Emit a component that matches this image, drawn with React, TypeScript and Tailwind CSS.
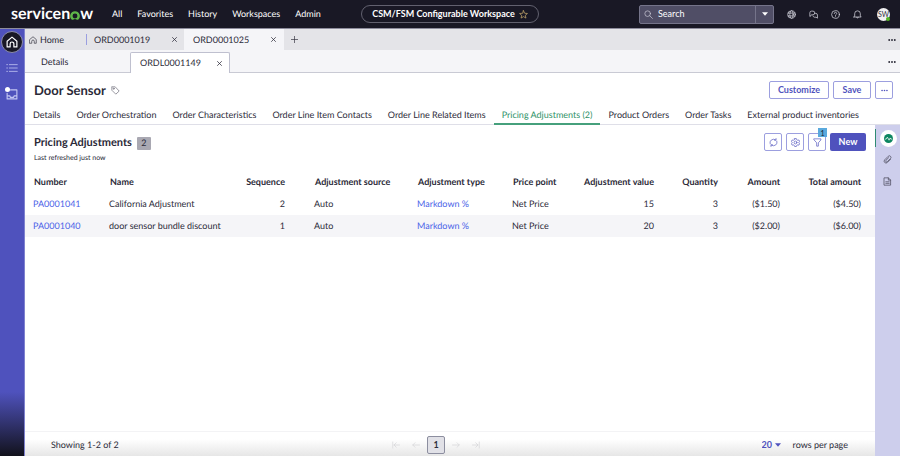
import type { ReactNode } from "react";

type IconProps = { className?: string; children: ReactNode; box?: number; stroke?: number };

function Icon({ className = "size-[9px]", children, box = 16, stroke = 1.3 }: IconProps) {
  return (
    <svg
      viewBox={`0 0 ${box} ${box}`}
      className={`shrink-0 ${className}`}
      fill="none"
      stroke="currentColor"
      strokeWidth={stroke}
      strokeLinecap="round"
      strokeLinejoin="round"
      aria-hidden="true"
    >
      {children}
    </svg>
  );
}

const Close = () => (
  <Icon className="size-[5px]" box={10} stroke={1.5}>
    <path d="M1 1l8 8M9 1l-8 8" />
  </Icon>
);

const Dots = ({ className = "size-2" }: { className?: string }) => (
  <svg viewBox="0 0 16 16" className={className} fill="currentColor" aria-hidden="true">
    <circle cx="2.4" cy="8" r="1.9" />
    <circle cx="8" cy="8" r="1.9" />
    <circle cx="13.6" cy="8" r="1.9" />
  </svg>
);

const House = ({ className, stroke }: { className: string; stroke?: number }) => (
  <Icon className={className} stroke={stroke}>
    <path d="M1.500 7L8 1.500l6.500 5.500V14.500H10.500V10.500a2.500 2.500 0 0 0-5 0V14.500H1.500Z" />
  </Icon>
);

function Logo() {
  return (
    <a href="#home" aria-label="servicenow" className="flex w-[82px] items-center text-[16px] leading-5 font-bold text-white">
      servicen
      <svg viewBox="0 0 20 18" className="mt-[3px] h-[9px] w-[10px] shrink-0" aria-hidden="true">
        <path
          d="M10 0.500A9.500 9.500 0 0 0 3.200 16.800c1 1 2.500 1.200 3.700.3a5.200 5.200 0 0 1 6.200 0c1.200.9 2.700.7 3.700-.3A9.500 9.500 0 0 0 10 .5Zm0 14.300a4.900 4.900 0 1 1 0-9.800 4.900 4.900 0 0 1 0 9.800Z"
          fill="#5fb64a"
        />
      </svg>
      w
    </a>
  );
}

function Header() {
  return (
    <header className="grid h-[29px] shrink-0 grid-cols-[1fr_auto_1fr] items-center border-b border-[#8d8c9c] bg-[#191825] text-white">
      <div className="flex items-center pl-[11px]">
        <Logo />
        <nav className="ml-[19px] flex gap-[15px]">
          {["All", "Favorites", "History", "Workspaces", "Admin"].map((item) => (
            <a key={item} href={`#${item}`}>
              {item}
            </a>
          ))}
        </nav>
      </div>
      <button className="flex h-[18px] w-[178px] items-center justify-center gap-1 rounded-full border border-[#62616f] font-bold">
        CSM/FSM Configurable Workspace
        <Icon className="size-[9px] text-[#c9ac6d]">
          <path d="M8 1.200l2 4.600 5 .4-3.800 3.300 1.200 4.900L8 11.800l-4.400 2.600 1.200-4.900L1 6.200l5-.4Z" />
        </Icon>
      </button>
      <div className="flex items-center justify-end pr-[10px]">
        <div className="flex h-[19px] w-[135px] items-center rounded-[2px] border border-[#75748a] bg-[#504e66]">
          <label htmlFor="search" className="ml-1 flex">
            <Icon className="size-[9px] text-[#c5c4d2]">
              <circle cx="6.500" cy="6.500" r="5" />
              <path d="M10.300 10.300L15 15" />
            </Icon>
          </label>
          <input
            id="search"
            type="text"
            aria-label="Search"
            placeholder="Search"
            className="ml-[5px] w-0 flex-1 bg-transparent outline-none placeholder:text-white"
          />
          <button aria-label="Search options" className="flex h-full w-[18px] items-center justify-center border-l border-[#75748a]">
            <svg viewBox="0 0 10 6" className="h-1 w-[6px]" fill="white" aria-hidden="true">
              <path d="M0 0h10L5 6Z" />
            </svg>
          </button>
        </div>
        <div className="ml-[13px] flex items-center gap-[13px] text-[#d8d8e2]">
          <button aria-label="Scope">
            <Icon>
              <circle cx="8" cy="8" r="6.700" />
              <ellipse cx="8" cy="8" rx="3" ry="6.700" />
              <path d="M1.800 5.500h12.400M1.800 10.500h12.400" />
            </Icon>
          </button>
          <button aria-label="Conversations">
            <Icon>
              <path d="M3 10.500L1.500 11.500V5a3 3 0 0 1 3-3H7a3 3 0 0 1 0 6.500H5Z" />
              <path d="M10.500 6H12a3 3 0 0 1 3 3v5.500L12.500 12.800H9.500A3 3 0 0 1 7 10.500" />
            </Icon>
          </button>
          <button aria-label="Help">
            <Icon>
              <circle cx="8" cy="8" r="6.900" />
              <path d="M5.800 6.200a2.200 2.200 0 1 1 3.300 1.900C8.300 8.600 8 8.900 8 9.700M8 11.900v.1" />
            </Icon>
          </button>
          <button aria-label="Notifications">
            <Icon>
              <path d="M1.500 12.500h13L13 10.500V6.500a5 5 0 0 0-10 0v4ZM6.200 12.800a1.900 1.900 0 0 0 3.600 0" />
            </Icon>
          </button>
        </div>
        <button
          aria-label="Account"
          className="relative ml-[15px] flex size-[13px] items-center justify-center rounded-full bg-[#f0f0f2] text-[7px] leading-none text-[#33323f]"
        >
          SW
          <span className="absolute right-0 bottom-0 size-1 rounded-full bg-[#52b524]" />
        </button>
      </div>
    </header>
  );
}

function Sidebar() {
  return (
    <aside className="flex w-[25px] shrink-0 flex-col items-center border-r border-[#7f82cf] bg-[linear-gradient(to_bottom,#4f52bd_0,#4f52bd_calc(100%_-_64px),#12121c_100%)]">
      <button aria-label="Home" className="mt-[2px] flex size-[22px] items-center justify-center rounded-full border border-[#8b8cab] bg-[#191825] text-white">
        <House className="size-3" stroke={1.6} />
      </button>
      <button aria-label="Lists" className="mt-[9px] text-[#b4b8ec]">
        <Icon className="size-3" stroke={1.2}>
          <path d="M1 3.500h1M4.500 3.500H15M1 8h1M4.500 8H15M1 12.500h1M4.500 12.500H15" />
        </Icon>
      </button>
      <button aria-label="Inbox" className="relative mt-[14px] text-[#c3c6f2]">
        <Icon className="size-3" stroke={1.5}>
          <path d="M6 2.500h8.500v12h-13V7M1.500 10.500h3.500L6 12.500h4l1-2h3.500" />
        </Icon>
        <span className="absolute -top-px -left-px size-[5px] rounded-full bg-white" />
      </button>
    </aside>
  );
}

function WorkspaceTabs() {
  return (
    <div className="flex h-[21px] shrink-0 items-center bg-[#e4e4e8]">
      <a href="#workspace" className="flex w-[61px] items-center gap-[3px] pl-1">
        <House className="size-2" stroke={1.3} />
        Home
      </a>
      <div className="flex h-[11px] w-[98px] items-center justify-between border-l border-[#9a9ee0] pr-[7px] pl-[7px]">
        <a href="#ORD0001019">ORD0001019</a>
        <button aria-label="Close ORD0001019">
          <Close />
        </button>
      </div>
      <div className="flex h-full w-[100px] items-center justify-between bg-[#f5f5f8] pr-2 pl-[9px]">
        <a href="#ORD0001025">ORD0001025</a>
        <button aria-label="Close ORD0001025">
          <Close />
        </button>
      </div>
      <button aria-label="New tab" className="ml-[7px]">
        <Icon className="size-[7px]" box={14}>
          <path d="M7 0.500v13M.5 7h13" />
        </Icon>
      </button>
      <button aria-label="More tabs" className="mr-1 ml-auto">
        <Dots />
      </button>
    </div>
  );
}

function RecordTabs() {
  return (
    <div className="flex h-[23px] shrink-0 items-end border-b border-[#c9cad4] bg-[#f5f5f8]">
      <a href="#details" className="flex h-5 w-[105px] items-center pl-4">
        Details
      </a>
      <div className="-mb-px flex h-[21px] w-[100px] items-center justify-between rounded-t-[2px] border border-b-0 border-[#bfc0cf] bg-white pr-[7px] pl-[9px]">
        <a href="#ORDL0001149">ORDL0001149</a>
        <button aria-label="Close ORDL0001149">
          <Close />
        </button>
      </div>
      <button aria-label="More record tabs" className="mr-1 ml-auto flex h-5 items-center">
        <Dots />
      </button>
    </div>
  );
}

const outline = "flex h-[18px] items-center justify-center rounded-[2px] border border-[#9c9fdf] font-bold text-[#4f52bd]";

function RecordHeader() {
  return (
    <div className="flex h-[34px] shrink-0 items-center pr-[7px] pl-[9px]">
      <h1 className="text-[13px] font-bold">Door Sensor</h1>
      <button aria-label="Tags" className="ml-[5px] text-[#74737f]">
        <Icon>
          <path d="M1.500 2v5.500l7 7 6-5.500-7-7.500H2Z" />
          <circle cx="4.800" cy="4.800" r="1" />
        </Icon>
      </button>
      <div className="ml-auto flex gap-1">
        <button className={`${outline} w-[60px]`}>Customize</button>
        <button className={`${outline} w-[38px]`}>Save</button>
        <button aria-label="More actions" className={`${outline} w-[18px]`}>
          <Dots className="size-[7px]" />
        </button>
      </div>
    </div>
  );
}

const sections = [
  "Details",
  "Order Orchestration",
  "Order Characteristics",
  "Order Line Item Contacts",
  "Order Line Related Items",
  "Pricing Adjustments (2)",
  "Product Orders",
  "Order Tasks",
  "External product inventories",
];

function SectionTabs() {
  return (
    <nav className="flex h-[18px] shrink-0 border-b border-[#dfdfe8]">
      {sections.map((name) => (
        <a
          key={name}
          href={`#${name}`}
          className={
            name === "Pricing Adjustments (2)"
              ? "-mb-px border-b-2 border-[#46a07c] px-2 pt-[2px] whitespace-nowrap text-[#2f9268]"
              : "px-2 pt-[2px] whitespace-nowrap"
          }
        >
          {name}
        </a>
      ))}
    </nav>
  );
}

function ListHeader() {
  return (
    <div className="flex items-start justify-between pt-2 pr-[9px] pl-[9px]">
      <div>
        <div className="flex items-center gap-[5px]">
          <h2 className="text-[11px] leading-5 font-bold">Pricing Adjustments</h2>
          <span className="flex h-[13px] w-[14px] items-center justify-center rounded-[1px] bg-[#a9a8b2]">2</span>
        </div>
        <p className="text-[7px] leading-[10px]">Last refreshed just now</p>
      </div>
      <div className="flex gap-1">
        <button aria-label="Refresh" className={`${outline} w-[18px]`}>
          <Icon stroke={1.2}>
            <path d="M2 10.500a6.300 6.300 0 0 1 9.500-7.200M14 5.500a6.300 6.300 0 0 1-9.500 7.200M12.500 1v2.800H9.700M3.500 15v-2.800h2.800" />
          </Icon>
        </button>
        <button aria-label="Settings" className={`${outline} w-[18px]`}>
          <Icon stroke={1.2}>
            <path d="M6.500 1h3l.6 2 1.900 1 2-.5 1.300 2.500L14 7.500v1.200l1.300 1.500-1.300 2.500-2-.5-1.900 1-.6 1.900h-3l-.6-1.900-1.900-1-2 .5L.7 10.200 2 8.700V7.500L.7 6 2 3.500l2 .5 1.900-1Z" />
            <circle cx="8" cy="8" r="2.500" />
          </Icon>
        </button>
        <button aria-label="Filter, 1 applied" className={`${outline} relative w-[18px]`}>
          <Icon stroke={1.2}>
            <path d="M2 1.500h12v2L9.500 8.500v6h-3v-6L2 3.500Z" />
          </Icon>
          <span className="absolute -top-[6px] right-[-2px] flex h-[9px] w-[9px] items-center justify-center bg-[#5aa9dd] text-[7px] font-normal text-[#1f2430]">
            1
          </span>
        </button>
        <button className="h-[18px] w-9 rounded-[2px] bg-[#4f52bd] font-bold text-white">New</button>
      </div>
    </div>
  );
}

const columns = [
  { name: "Number", width: "w-[76px]", right: false },
  { name: "Name", width: "", right: false },
  { name: "Sequence", width: "w-[68px]", right: true },
  { name: "Adjustment source", width: "w-[103px]", right: false },
  { name: "Adjustment type", width: "w-[95px]", right: false },
  { name: "Price point", width: "w-[71px]", right: false },
  { name: "Adjustment value", width: "w-[100px]", right: true },
  { name: "Quantity", width: "w-[64px]", right: true },
  { name: "Amount", width: "w-[62px]", right: true },
  { name: "Total amount", width: "w-[74px]", right: true },
];

const rows = [
  ["PA0001041", "California Adjustment", "2", "Auto", "Markdown %", "Net Price", "15", "3", "($1.50)", "($4.50)"],
  ["PA0001040", "door sensor bundle discount", "1", "Auto", "Markdown %", "Net Price", "20", "3", "($2.00)", "($6.00)"],
];

function AdjustmentsTable() {
  return (
    <table className="mt-2 w-full table-fixed whitespace-nowrap">
      <colgroup>
        {columns.map((c) => (
          <col key={c.name} className={c.width} />
        ))}
      </colgroup>
      <thead>
        <tr className="h-[22px]">
          {columns.map((c) => (
            <th
              key={c.name}
              className={c.right ? "pr-[21px] text-right font-bold last:pr-[14px]" : "pl-[9px] text-left font-bold"}
            >
              {c.name}
            </th>
          ))}
        </tr>
      </thead>
      <tbody>
        {rows.map((row) => (
          <tr key={row[0]} className="h-[22px] even:bg-[#f5f5f8]">
            {row.map((cell, i) => (
              <td
                key={columns[i].name}
                className={columns[i].right ? "pr-[21px] text-right last:pr-[14px]" : "pl-2 text-left"}
              >
                {i === 0 || i === 4 ? (
                  <a href={`#${cell}`} className="text-[#4a62e8]">
                    {cell}
                  </a>
                ) : (
                  cell
                )}
              </td>
            ))}
          </tr>
        ))}
      </tbody>
    </table>
  );
}

function Pagination() {
  return (
    <footer className="mt-auto flex h-[25px] items-center justify-between border-t border-[#f3f3f5] bg-linear-to-b from-white from-30% to-[#e6e6e6] pt-[2px] pr-[27px] pl-[26px]">
      <span>Showing 1-2 of 2</span>
      <div className="flex items-center gap-[7px] text-[#d2d2d6]">
        <button aria-label="First page" className="mr-[5px]" disabled>
          <Icon className="size-2">
            <path d="M1.500 2v12M15 8H4M8.500 3.500L4 8l4.500 4.500" />
          </Icon>
        </button>
        <button aria-label="Previous page" disabled>
          <Icon className="size-2">
            <path d="M15 8H1.500M6 3.500L1.500 8 6 12.500" />
          </Icon>
        </button>
        <button aria-current="page" className="h-[18px] w-[18px] rounded-[2px] border border-[#8c8e9f] bg-[#e1e1e7] font-bold text-[#2e2d3a]">
          1
        </button>
        <button aria-label="Next page" disabled>
          <Icon className="size-2">
            <path d="M1 8h13.500M10 3.500L14.500 8 10 12.500" />
          </Icon>
        </button>
        <button aria-label="Last page" className="ml-[5px]" disabled>
          <Icon className="size-2">
            <path d="M14.500 2v12M1 8h11M7.500 3.500L12 8l-4.500 4.500" />
          </Icon>
        </button>
      </div>
      <div className="flex items-center pl-2">
        <select id="page-size" defaultValue="20" className="w-[13px] appearance-none bg-transparent font-bold text-[#4f52bd]">
          <option>20</option>
          <option>50</option>
        </select>
        <svg viewBox="0 0 10 6" className="mr-3 h-[4px] w-[6px]" fill="#4f52bd" aria-hidden="true">
          <path d="M0 0h10L5 6Z" />
        </svg>
        <label htmlFor="page-size">rows per page</label>
      </div>
    </footer>
  );
}

function ContextRail() {
  return (
    <aside className="flex w-[25px] shrink-0 flex-col items-center bg-[#cdceec] text-[#4b4a5c]">
      <div className="mt-1 flex h-[18px] w-full items-center border-l border-[#2f8a72] pl-1">
        <button aria-label="Activity" className="flex size-[17px] items-center justify-center rounded-full bg-white">
          <svg viewBox="0 0 16 16" className="size-[9px]" aria-hidden="true">
            <circle cx="8" cy="8" r="8" fill="#0d8660" />
            <path d="M1.500 9h2.500l2-3.500 3 5.500 2-4 1 2h2.500" fill="none" stroke="white" strokeWidth="1.300" />
          </svg>
        </button>
      </div>
      <button aria-label="Attachments" className="mt-2">
        <Icon>
          <path d="M13.500 7.500l-5.800 5.800a3.300 3.300 0 0 1-4.700-4.700L9.300 2.300a2.800 2.800 0 0 1 4 4L7.500 12a1.700 1.700 0 0 1-2.400-2.400L10 4.800" />
        </Icon>
      </button>
      <button aria-label="Templates" className="mt-[13px]">
        <Icon>
          <path d="M2.500 1.500h7l4 4v9h-11ZM9.500 1.500v4h4M5 8.500h6M5 11.300h6" />
        </Icon>
      </button>
    </aside>
  );
}

export default function App() {
  return (
    <div className="flex min-h-screen flex-col bg-white font-['Lato','Liberation_Sans',sans-serif] text-[9px] leading-3 text-[#2b2a38] [text-rendering:geometricPrecision]">
      <Header />
      <div className="flex flex-1">
        <Sidebar />
        <div className="flex min-w-0 flex-1 flex-col">
          <WorkspaceTabs />
          <RecordTabs />
          <RecordHeader />
          <SectionTabs />
          <div className="flex flex-1">
            <main className="flex min-w-0 flex-1 flex-col">
              <ListHeader />
              <AdjustmentsTable />
              <Pagination />
            </main>
            <ContextRail />
          </div>
        </div>
      </div>
    </div>
  );
}
